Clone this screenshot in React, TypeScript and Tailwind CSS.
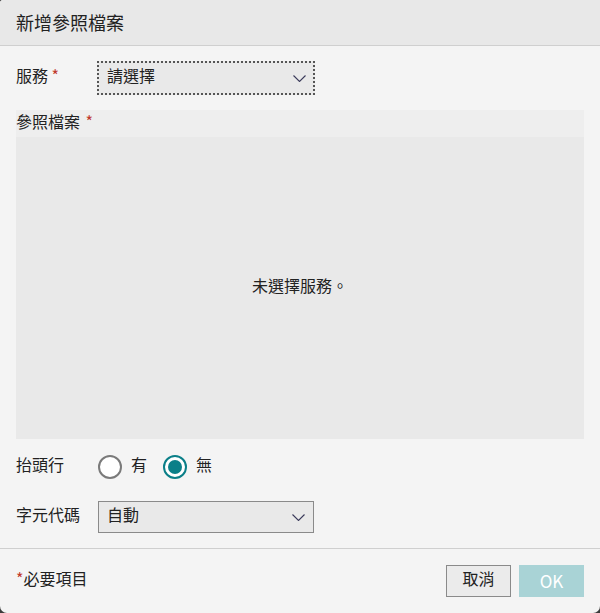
import React, { useState } from 'react';

const Chevron = () => (
    <svg width="13" height="7" viewBox="0 0 13 7" fill="none" stroke="#3a3a5a" strokeWidth={1.1}>
        <path d="M0.5 0.5l6 6 6-6" />
    </svg>
);

// CJK glyphs sit a little low in the line box, nudge them up
const T = ({ children, className = '' }: { children: React.ReactNode; className?: string }) => (
    <span className={`-translate-y-[3px] ${className}`}>{children}</span>
);

const Radio = ({ checked, label, onClick }: { checked: boolean; label: string; onClick: () => void }) => (
    <button onClick={onClick} className="flex items-center gap-[9px] focus:outline-none">
        <span
            className={`flex h-[24px] w-[24px] items-center justify-center rounded-full border-2 bg-white ${
                checked ? 'border-[#0b7f88]' : 'border-[#7a7a7a]'
            }`}
        >
            {checked && <span className="h-[14px] w-[14px] rounded-full bg-[#0b7f88]" />}
        </span>
        <T className="inline-block">{label}</T>
    </button>
);

const App: React.FC = () => {
    const [header, setHeader] = useState(false);

    return (
        <div className="h-[613px] w-[600px] bg-[#3c3c3c]" style={{ fontFamily: '"Noto Sans CJK TC", "Noto Sans", sans-serif' }}>
            <div className="flex h-full flex-col overflow-hidden rounded-b-[7px] rounded-tl-[3px] bg-[#f4f4f4] text-[16px] text-[#222]">
                <div className="flex h-[46px] shrink-0 items-center border-b border-[#cfcfcf] bg-[#e8e8e8] px-4 text-[18px]">
                    新增參照檔案
                </div>

                <div className="flex flex-1 flex-col px-4 pt-[15px]">
                    <div className="flex items-center">
                        <div className="w-[81px]">
                            <T className="inline-block">
                                服務 <span className="text-[#c0392b]">*</span>
                            </T>
                        </div>
                        <button className="flex h-[34px] w-[218px] items-center justify-between border-2 border-dotted border-[#555] bg-[#e9e9e9] pl-[8px] pr-[7px]">
                            <T className="inline-block">請選擇</T>
                            <Chevron />
                        </button>
                    </div>

                    <div className="mt-[15px] flex h-[329px] flex-col">
                        <div className="flex h-[27px] items-center bg-[#eeeeee]">
                            <T className="inline-block">
                                參照檔案 <span className="ml-0.5 text-[#c0392b]">*</span>
                            </T>
                        </div>
                        <div className="flex flex-1 items-center justify-center bg-[#e9e9e9]">
                            <T className="inline-block">未選擇服務。</T>
                        </div>
                    </div>

                    <div className="mt-[15px] flex h-[26px] items-center">
                        <div className="w-[82px]">
                            <T className="inline-block">抬頭行</T>
                        </div>
                        <div className="flex items-center gap-[16px]">
                            <Radio checked={header} label="有" onClick={() => setHeader(true)} />
                            <Radio checked={!header} label="無" onClick={() => setHeader(false)} />
                        </div>
                    </div>

                    <div className="mt-[21px] flex items-center">
                        <div className="w-[82px]">
                            <T className="inline-block">字元代碼</T>
                        </div>
                        <button className="flex h-[32px] w-[216px] items-center justify-between border border-[#8a8a8a] bg-[#e9e9e9] pl-[8px] pr-[8px]">
                            <T className="inline-block">自動</T>
                            <Chevron />
                        </button>
                    </div>
                </div>

                <div className="flex h-[65px] shrink-0 items-center justify-between border-t border-[#cfcfcf] px-4">
                    <T className="inline-block">
                        <span className="text-[#c0392b]">*</span>必要項目
                    </T>
                    <div className="flex gap-[8px]">
                        <button className="h-[32px] w-[65px] border border-[#8a8a8a] bg-[#ebebeb]">
                            <T className="inline-block">取消</T>
                        </button>
                        <button className="h-[32px] w-[65px] bg-[#a9d3d6] text-[17px] text-white">OK</button>
                    </div>
                </div>
            </div>
        </div>
    );
};

export default App;
